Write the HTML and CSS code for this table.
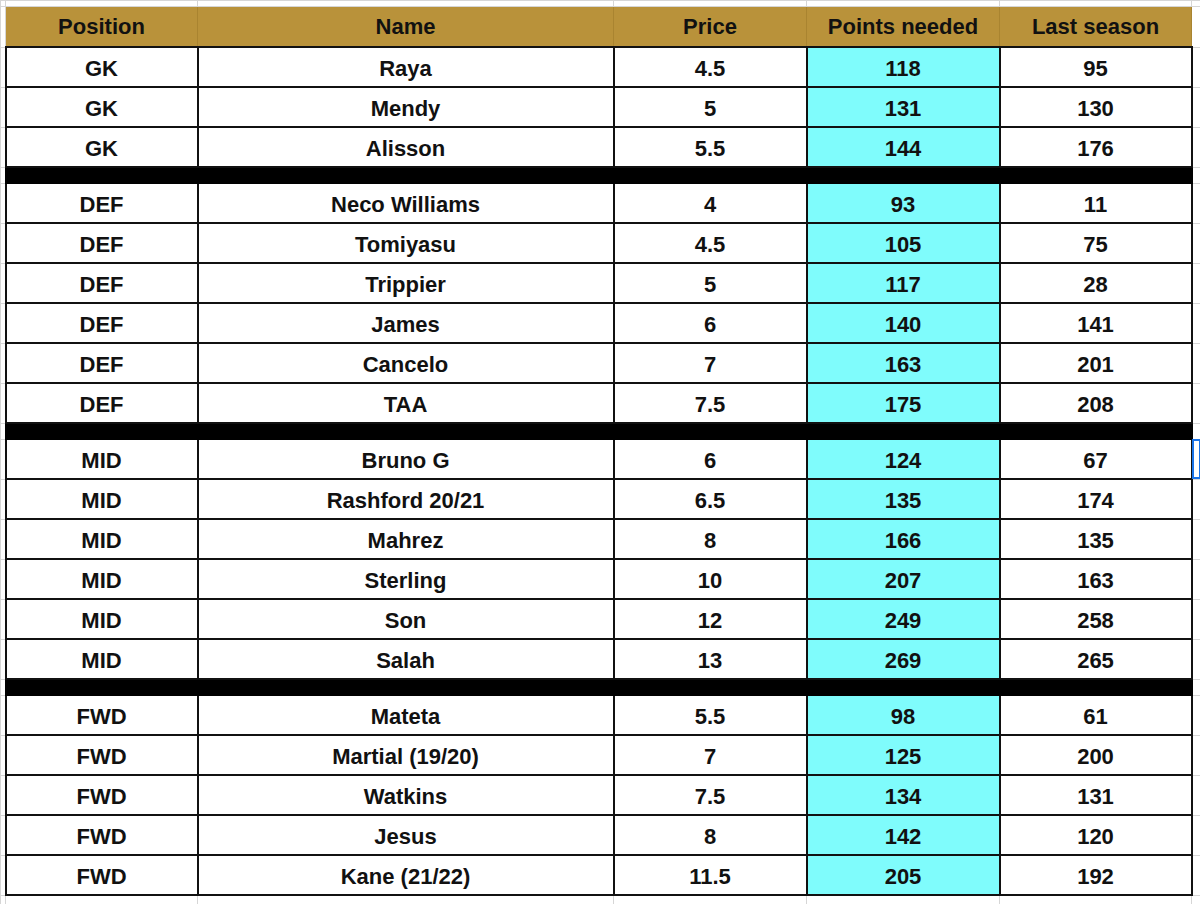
FILE: index.html
```html
<!DOCTYPE html>
<html>
<head>
<meta charset="utf-8">
<link rel="stylesheet" href="styles.css">
</head>
<body>
<table class="sheet">
  <colgroup>
    <col class="c-gut">
    <col class="c-pos">
    <col class="c-name">
    <col class="c-price">
    <col class="c-pts">
    <col class="c-last">
    <col class="c-rest">
  </colgroup>
  <tr class="strip">
    <td class="g"></td><td class="g"></td><td class="g"></td><td class="g"></td><td class="g"></td><td class="g"></td><td class="g"></td>
  </tr>
  <tr class="head">
    <td class="g"></td><th>Position</th><th>Name</th><th>Price</th><th>Points needed</th><th>Last season</th><td class="g"></td>
  </tr>
  <tr class="row"><td class="g"></td><td>GK</td><td>Raya</td><td>4.5</td><td class="pts">118</td><td>95</td><td class="g"></td></tr>
  <tr class="row"><td class="g"></td><td>GK</td><td>Mendy</td><td>5</td><td class="pts">131</td><td>130</td><td class="g"></td></tr>
  <tr class="row"><td class="g"></td><td>GK</td><td>Alisson</td><td>5.5</td><td class="pts">144</td><td>176</td><td class="g"></td></tr>
  <tr class="sep"><td class="g"></td><td colspan="5"></td><td class="g"></td></tr>
  <tr class="row"><td class="g"></td><td>DEF</td><td>Neco Williams</td><td>4</td><td class="pts">93</td><td>11</td><td class="g"></td></tr>
  <tr class="row"><td class="g"></td><td>DEF</td><td>Tomiyasu</td><td>4.5</td><td class="pts">105</td><td>75</td><td class="g"></td></tr>
  <tr class="row"><td class="g"></td><td>DEF</td><td>Trippier</td><td>5</td><td class="pts">117</td><td>28</td><td class="g"></td></tr>
  <tr class="row"><td class="g"></td><td>DEF</td><td>James</td><td>6</td><td class="pts">140</td><td>141</td><td class="g"></td></tr>
  <tr class="row"><td class="g"></td><td>DEF</td><td>Cancelo</td><td>7</td><td class="pts">163</td><td>201</td><td class="g"></td></tr>
  <tr class="row"><td class="g"></td><td>DEF</td><td>TAA</td><td>7.5</td><td class="pts">175</td><td>208</td><td class="g"></td></tr>
  <tr class="sep"><td class="g"></td><td colspan="5"></td><td class="g"></td></tr>
  <tr class="row"><td class="g"></td><td>MID</td><td>Bruno G</td><td>6</td><td class="pts">124</td><td>67</td><td class="g selected"></td></tr>
  <tr class="row"><td class="g"></td><td>MID</td><td>Rashford 20/21</td><td>6.5</td><td class="pts">135</td><td>174</td><td class="g"></td></tr>
  <tr class="row"><td class="g"></td><td>MID</td><td>Mahrez</td><td>8</td><td class="pts">166</td><td>135</td><td class="g"></td></tr>
  <tr class="row"><td class="g"></td><td>MID</td><td>Sterling</td><td>10</td><td class="pts">207</td><td>163</td><td class="g"></td></tr>
  <tr class="row"><td class="g"></td><td>MID</td><td>Son</td><td>12</td><td class="pts">249</td><td>258</td><td class="g"></td></tr>
  <tr class="row"><td class="g"></td><td>MID</td><td>Salah</td><td>13</td><td class="pts">269</td><td>265</td><td class="g"></td></tr>
  <tr class="sep"><td class="g"></td><td colspan="5"></td><td class="g"></td></tr>
  <tr class="row"><td class="g"></td><td>FWD</td><td>Mateta</td><td>5.5</td><td class="pts">98</td><td>61</td><td class="g"></td></tr>
  <tr class="row"><td class="g"></td><td>FWD</td><td>Martial (19/20)</td><td>7</td><td class="pts">125</td><td>200</td><td class="g"></td></tr>
  <tr class="row"><td class="g"></td><td>FWD</td><td>Watkins</td><td>7.5</td><td class="pts">134</td><td>131</td><td class="g"></td></tr>
  <tr class="row"><td class="g"></td><td>FWD</td><td>Jesus</td><td>8</td><td class="pts">142</td><td>120</td><td class="g"></td></tr>
  <tr class="row"><td class="g"></td><td>FWD</td><td>Kane (21/22)</td><td>11.5</td><td class="pts">205</td><td>192</td><td class="g"></td></tr>
  <tr class="strip-bottom">
    <td class="g"></td><td class="g"></td><td class="g"></td><td class="g"></td><td class="g"></td><td class="g"></td><td class="g"></td>
  </tr>
</table>
</body>
</html>
```
FILE: styles.css
```css
html, body {
  margin: 0;
  padding: 0;
  background: #ffffff;
  overflow: hidden;
}

.sheet {
  width: 1200px;
  table-layout: fixed;
  border-collapse: collapse;
  font-family: "Liberation Sans", Arial, sans-serif;
  font-weight: bold;
  font-size: 22px;
  color: #111111;
}

.c-gut { width: 5px; }
.c-pos { width: 192px; }
.c-name { width: 416px; }
.c-price { width: 193px; }
.c-pts { width: 193px; }
.c-last { width: 192px; }
.c-rest { width: 9px; }

.sheet td, .sheet th {
  padding: 0;
  text-align: center;
  vertical-align: middle;
  white-space: nowrap;
  overflow: hidden;
}

.sheet td.g {
  border: 1px solid #d6d6d6;
  background: #ffffff;
}

.strip td { height: 5px; }
.strip-bottom td { height: 9px; }

.head th {
  height: 39px;
  background: #b9923a;
  font-weight: bold;
  border-top: 1px solid #d6d6d6;
  border-left: 1px solid #a98430;
  border-right: 1px solid #a98430;
  border-bottom: 2px solid #111111;
}

.row td {
  height: 34px;
  padding-top: 4px;
  border: 2px solid #111111;
  background: #ffffff;
}

.row td.pts {
  background: #7ffcfc;
}

.row td.g {
  border: 1px solid #d6d6d6;
}

.row td.selected {
  outline: 2px solid #1a73e8;
  outline-offset: -2px;
}

.sep td {
  height: 14px;
  background: #000000;
  border: 2px solid #000000;
}

.sep td.g {
  background: #ffffff;
  border: 1px solid #d6d6d6;
}
```
